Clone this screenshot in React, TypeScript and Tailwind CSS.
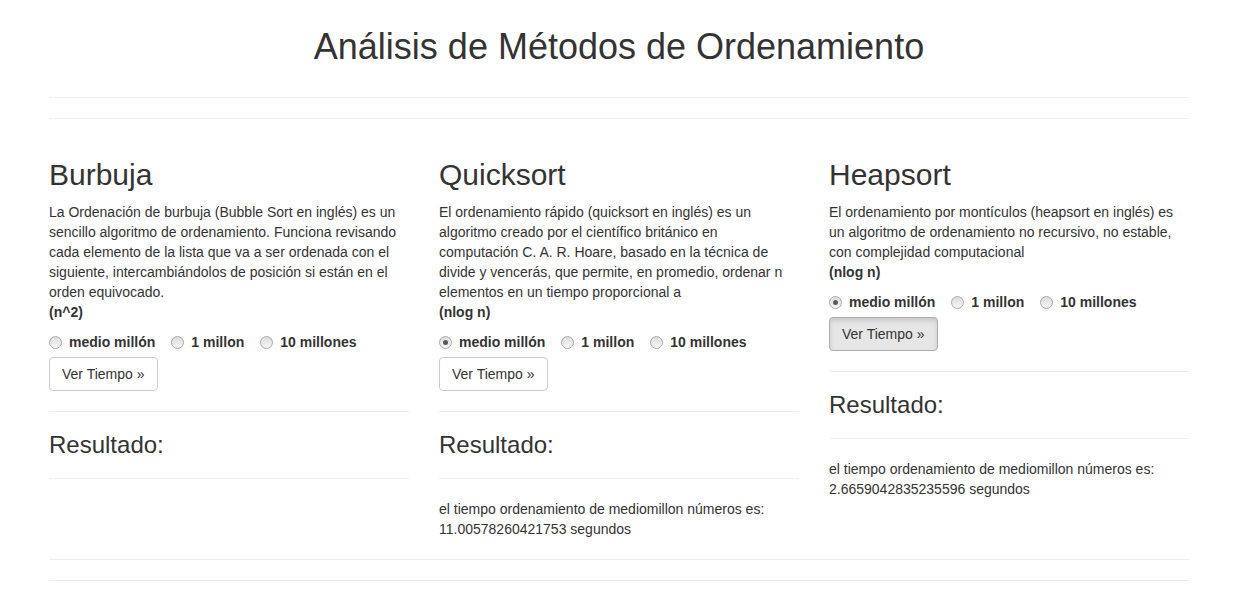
import { useState } from "react";

type Algo = {
  name: string;
  lines: string[];
  order: string;
  selected: number | null;
  active?: boolean;
  result?: string[];
};

const ALGOS: Algo[] = [
  {
    name: "Burbuja",
    lines: [
      "La Ordenación de burbuja (Bubble Sort en inglés) es un",
      "sencillo algoritmo de ordenamiento. Funciona revisando",
      "cada elemento de la lista que va a ser ordenada con el",
      "siguiente, intercambiándolos de posición si están en el",
      "orden equivocado.",
    ],
    order: "(n^2)",
    selected: null,
  },
  {
    name: "Quicksort",
    lines: [
      "El ordenamiento rápido (quicksort en inglés) es un",
      "algoritmo creado por el científico británico en",
      "computación C. A. R. Hoare, basado en la técnica de",
      "divide y vencerás, que permite, en promedio, ordenar n",
      "elementos en un tiempo proporcional a",
    ],
    order: "(nlog n)",
    selected: 0,
    result: [
      "el tiempo ordenamiento de mediomillon números es:",
      "11.00578260421753 segundos",
    ],
  },
  {
    name: "Heapsort",
    lines: [
      "El ordenamiento por montículos (heapsort en inglés) es",
      "un algoritmo de ordenamiento no recursivo, no estable,",
      "con complejidad computacional",
    ],
    order: "(nlog n)",
    selected: 0,
    active: true,
    result: [
      "el tiempo ordenamiento de mediomillon números es:",
      "2.6659042835235596 segundos",
    ],
  },
];

const SIZES = ["medio millón", "1 millon", "10 millones"];

function Radio({ checked }: { checked: boolean }) {
  return (
    <span className="flex h-[13px] w-[13px] shrink-0 items-center justify-center rounded-full border border-[#a9a9a9] bg-linear-to-b from-[#dcdcdc] to-[#f6f6f6]">
      {checked && <span className="h-[5px] w-[5px] rounded-full bg-[#595959]" />}
    </span>
  );
}

function Column({ algo }: { algo: Algo }) {
  const [selected, setSelected] = useState<number | null>(algo.selected);

  return (
    <div className="flex w-[360px] flex-col">
      <h2 className="mt-[39px] text-[30px] leading-[33px] font-normal">{algo.name}</h2>
      <p className="mt-[11px] text-[14px] leading-[20px]">
        {algo.lines.map((l) => (
          <span key={l} className="block whitespace-nowrap">
            {l}
          </span>
        ))}
        <b className="block">{algo.order}</b>
      </p>

      {/* Size options */}
      <div className="mt-[10px] flex h-[20px] items-center text-[14px] font-bold">
        {SIZES.map((s, i) => (
          <label
            key={s}
            onClick={() => setSelected(i)}
            className="mr-[16px] flex cursor-pointer items-center gap-[7px]"
          >
            <Radio checked={selected === i} />
            {s}
          </label>
        ))}
      </div>

      <div className="mt-[5px]">
        <button
          className={
            algo.active
              ? "h-[34px] rounded-[4px] border border-[#adadad] bg-[#e6e6e6] px-[12px] text-[14px] leading-[20px] text-[#333] shadow-[inset_0_3px_5px_rgba(0,0,0,0.125)]"
              : "h-[34px] rounded-[4px] border border-[#ccc] bg-white px-[12px] text-[14px] leading-[20px] text-[#333]"
          }
        >
          Ver Tiempo »
        </button>
      </div>

      <hr className="mt-[20px] border-t border-[#eee]" />
      <h3 className="mt-[20px] text-[24px] leading-[26px] font-normal">Resultado:</h3>
      <hr className="mt-[20px] border-t border-[#eee]" />

      {algo.result && (
        <p className="mt-[20px] text-[14px] leading-[20px]">
          {algo.result.map((r) => (
            <span key={r} className="block whitespace-nowrap">
              {r}
            </span>
          ))}
        </p>
      )}
    </div>
  );
}

export default function App() {
  return (
    <div className="min-h-screen bg-white font-['Liberation_Sans',Arial,sans-serif] text-[#333]">
      <div className="ml-[49px] w-[1140px] pb-[20px]">
        <h1 className="pt-[27px] text-center text-[36px] leading-[40px] font-normal">
          Análisis de Métodos de Ordenamiento
        </h1>
        <hr className="mt-[30px] border-t border-[#eee]" />
        <hr className="mt-[20px] border-t border-[#eee]" />

        <div className="flex gap-[30px]">
          {ALGOS.map((a) => (
            <Column key={a.name} algo={a} />
          ))}
        </div>

        <hr className="mt-[20px] border-t border-[#eee]" />
        <hr className="mt-[20px] border-t border-[#eee]" />
      </div>
    </div>
  );
}
